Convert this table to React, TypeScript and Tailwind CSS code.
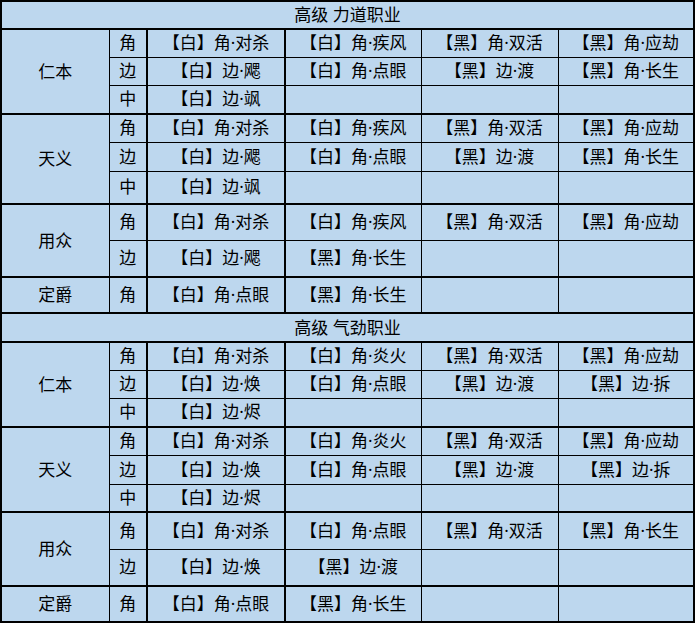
import React from "react";

type Row = { pos: string; cells: string[]; h: string };
type Group = { name: string; rows: Row[] };
type Section = { title: string; h: string; groups: Group[] };

const sections: Section[] = [
  {
    title: "高级 力道职业",
    h: "h-[28px]",
    groups: [
      {
        name: "仁本",
        rows: [
          { pos: "角", h: "h-[28px]", cells: ["【白】角·对杀", "【白】角·疾风", "【黑】角·双活", "【黑】角·应劫"] },
          { pos: "边", h: "h-[28px]", cells: ["【白】边·飔", "【白】角·点眼", "【黑】边·渡", "【黑】角·长生"] },
          { pos: "中", h: "h-[29px]", cells: ["【白】边·飒", "", "", ""] },
        ],
      },
      {
        name: "天义",
        rows: [
          { pos: "角", h: "h-[28px]", cells: ["【白】角·对杀", "【白】角·疾风", "【黑】角·双活", "【黑】角·应劫"] },
          { pos: "边", h: "h-[29px]", cells: ["【白】边·飔", "【白】角·点眼", "【黑】边·渡", "【黑】角·长生"] },
          { pos: "中", h: "h-[33px]", cells: ["【白】边·飒", "", "", ""] },
        ],
      },
      {
        name: "用众",
        rows: [
          { pos: "角", h: "h-[36px]", cells: ["【白】角·对杀", "【白】角·疾风", "【黑】角·双活", "【黑】角·应劫"] },
          { pos: "边", h: "h-[37px]", cells: ["【白】边·飔", "【黑】角·长生", "", ""] },
        ],
      },
      {
        name: "定爵",
        rows: [{ pos: "角", h: "h-[36px]", cells: ["【白】角·点眼", "【黑】角·长生", "", ""] }],
      },
    ],
  },
  {
    title: "高级 气劲职业",
    h: "h-[29px]",
    groups: [
      {
        name: "仁本",
        rows: [
          { pos: "角", h: "h-[28px]", cells: ["【白】角·对杀", "【白】角·炎火", "【黑】角·双活", "【黑】角·应劫"] },
          { pos: "边", h: "h-[28px]", cells: ["【白】边·焕", "【白】角·点眼", "【黑】边·渡", "【黑】边·拆"] },
          { pos: "中", h: "h-[29px]", cells: ["【白】边·烬", "", "", ""] },
        ],
      },
      {
        name: "天义",
        rows: [
          { pos: "角", h: "h-[28px]", cells: ["【白】角·对杀", "【白】角·炎火", "【黑】角·双活", "【黑】角·应劫"] },
          { pos: "边", h: "h-[29px]", cells: ["【白】边·焕", "【白】角·点眼", "【黑】边·渡", "【黑】边·拆"] },
          { pos: "中", h: "h-[28px]", cells: ["【白】边·烬", "", "", ""] },
        ],
      },
      {
        name: "用众",
        rows: [
          { pos: "角", h: "h-[37px]", cells: ["【白】角·对杀", "【白】角·点眼", "【黑】角·双活", "【黑】角·长生"] },
          { pos: "边", h: "h-[37px]", cells: ["【白】边·焕", "【黑】边·渡", "", ""] },
        ],
      },
      {
        name: "定爵",
        rows: [{ pos: "角", h: "h-[36px]", cells: ["【白】角·点眼", "【黑】角·长生", "", ""] }],
      },
    ],
  },
];

const cell = "border border-black text-center align-middle whitespace-nowrap p-0";

export default function App() {
  return (
    <div className="w-[695px] h-[623px] bg-white">
      <table
        className="w-[695px] table-fixed border-collapse border-2 border-black bg-[#bdd7ee] text-black text-[17px] leading-[20px]"
        style={{ fontFamily: '"Noto Sans", "Noto Sans CJK SC", sans-serif' }}
      >
        <colgroup>
          <col className="w-[108px]" />
          <col className="w-[38px]" />
          <col className="w-[138px]" />
          <col className="w-[136px]" />
          <col className="w-[137px]" />
          <col className="w-[136px]" />
        </colgroup>
        <tbody>
          {sections.map((sec) => (
            <React.Fragment key={sec.title}>
              <tr className={sec.h}>
                <td colSpan={6} className={`${cell} border-b-2 border-t-2`}>
                  {sec.title}
                </td>
              </tr>
              {sec.groups.map((g) =>
                g.rows.map((r, i) => {
                  const last = i === g.rows.length - 1;
                  const bb = last ? "border-b-2" : "";
                  return (
                    <tr key={sec.title + g.name + i} className={r.h}>
                      {i === 0 && (
                        <td rowSpan={g.rows.length} className={`${cell} border-b-2`}>
                          {g.name}
                        </td>
                      )}
                      <td className={`${cell} border-r-2 ${bb}`}>{r.pos}</td>
                      {r.cells.map((c, j) => (
                        <td key={j} className={`${cell} ${j === 0 ? "border-r-2" : ""} ${bb}`}>
                          {c}
                        </td>
                      ))}
                    </tr>
                  );
                })
              )}
            </React.Fragment>
          ))}
        </tbody>
      </table>
    </div>
  );
}
